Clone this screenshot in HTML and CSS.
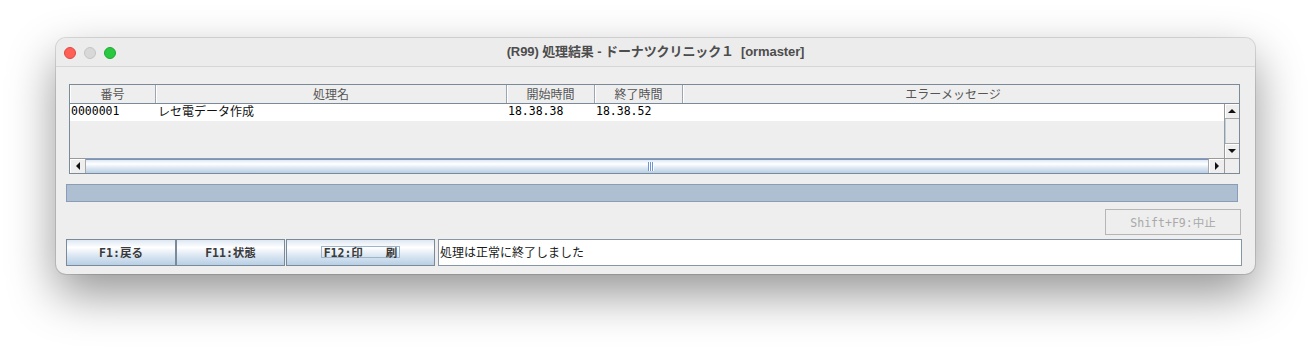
FILE: index.html
```html
<!DOCTYPE html>
<html lang="ja">
<head>
<meta charset="utf-8">
<title>(R99) 処理結果</title>
<link rel="stylesheet" href="styles.css">
</head>
<body>
<div class="window">
  <div class="titlebar">
    <div class="lights">
      <span class="light red"></span>
      <span class="light gray"></span>
      <span class="light green"></span>
    </div>
    <div class="title">(R99) 処理結果 - ドーナツクリニック１&nbsp;&nbsp;[ormaster]</div>
    <div></div>
  </div>
  <div class="content">
    <div class="table">
      <div class="thead">
        <div class="th c1">番号</div>
        <div class="th c2">処理名</div>
        <div class="th c3">開始時間</div>
        <div class="th c4">終了時間</div>
        <div class="th c5 last">エラーメッセージ</div>
        <div class="th-corner"></div>
      </div>
      <div class="tbody">
        <div class="viewport">
          <div class="tr">
            <div class="td c1 mono">0000001</div>
            <div class="td c2">レセ電データ作成</div>
            <div class="td c3 mono">18.38.38</div>
            <div class="td c4 mono">18.38.52</div>
            <div class="td c5"></div>
          </div>
        </div>
        <div class="vscroll">
          <div class="sbtn vbtn"><span class="arrow up"></span></div>
          <div class="vtrack"></div>
          <div class="sbtn vbtn down-btn"><span class="arrow down"></span></div>
        </div>
      </div>
      <div class="hrow">
        <div class="hscroll">
          <div class="sbtn hbtn left-btn"><span class="arrow left"></span></div>
          <div class="hthumb"><span class="grip"></span></div>
          <div class="sbtn hbtn right-btn"><span class="arrow right"></span></div>
        </div>
        <div class="corner"></div>
      </div>
    </div>
    <div class="progress"></div>
    <div class="action-row">
      <button class="cancel" disabled>Shift+F9:中止</button>
    </div>
    <div class="footer">
      <button class="fbtn b1">F1:戻る</button>
      <button class="fbtn b2">F11:状態</button>
      <button class="fbtn b3"><span class="focus">F12:印　　刷</span></button>
      <div class="status">処理は正常に終了しました</div>
    </div>
  </div>
</div>
</body>
</html>
```

FILE: styles.css
```css
* { box-sizing: border-box; }

html {
  height: 100%;
  background: #ffffff;
}

body {
  margin: 0;
  min-height: 100%;
  padding: 38px 0 0 56px;
  background: #ffffff;
  font-family: "Noto Sans CJK JP", sans-serif;
}

.window {
  width: 1199px;
  height: 236px;
  border-radius: 10px;
  background: #eeeeee;
  box-shadow: 0 0 0 1px rgba(0, 0, 0, 0.12), 0 20px 48px rgba(0, 0, 0, 0.42);
  overflow: hidden;
  display: flex;
  flex-direction: column;
}

.titlebar {
  height: 29px;
  flex: none;
  background: #ececec;
  border-bottom: 1px solid #d6d6d6;
  display: grid;
  grid-template-columns: 1fr auto 1fr;
  align-items: center;
}

.lights {
  display: flex;
  gap: 8px;
  padding-left: 8px;
  padding-top: 1px;
}

.light {
  width: 12px;
  height: 12px;
  border-radius: 50%;
}
.light.red { background: #fe5f57; border: 1px solid #e2463f; }
.light.gray { background: #d8d8d8; border: 1px solid #c4c4c4; }
.light.green { background: #2ac840; border: 1px solid #1ea833; }

.title {
  font: bold 13px "Liberation Sans", "Noto Sans CJK JP", sans-serif;
  color: #4d4d4d;
  white-space: pre;
  margin-top: -3px;
  letter-spacing: -0.1px;
}

.content {
  flex: 1;
  padding: 17px 13px 8px 10px;
  display: flex;
  flex-direction: column;
}

/* table */
.table {
  margin: 0 2px 0 3px;
  height: 90px;
  flex: none;
  border: 1px solid #7a8a99;
  display: flex;
  flex-direction: column;
  background: #eeeeee;
}

.thead {
  height: 19px;
  display: flex;
  border-bottom: 1px solid #7a8a99;
}

.th {
  font-size: 12px;
  color: #555555;
  text-align: center;
  line-height: 17px;
  border-right: 1px solid #9aa6b2;
  box-shadow: inset 1px 0 0 #ffffff;
  white-space: nowrap;
}

.th.last { border-right: none; width: 540px; }

.c1 { width: 86px; }
.c2 { width: 351px; }
.c3 { width: 88px; }
.c4 { width: 88px; }
.c5 { width: 541px; }

.th-corner {
  flex: 1;
}

.tbody {
  height: 54px;
  display: flex;
}

.viewport {
  width: 1154px;
  background: #eeeeee;
}

.tr {
  display: flex;
  height: 17px;
  background: #ffffff;
}

.td {
  font-size: 12px;
  line-height: 13px;
  height: 17px;
  color: #111111;
  padding-left: 2px;
  white-space: nowrap;
}

.td.mono {
  font-family: "DejaVu Sans Mono", "Noto Sans CJK JP", monospace;
  font-size: 11.5px;
  line-height: 15px;
  padding-left: 1px;
  color: #000000;
}

.vscroll {
  flex: 1;
  display: flex;
  flex-direction: column;
  border-left: 1px solid #9a9a9a;
}

.sbtn {
  background: #eeeeee;
  display: flex;
  align-items: center;
  justify-content: center;
}

.vbtn {
  height: 15px;
  border-bottom: 1px solid #a8a8a8;
  box-shadow: inset 1px 1px 0 #ffffff;
}

.down-btn {
  border-top: 1px solid #a8a8a8;
  border-bottom: none;
}

.vtrack {
  flex: 1;
  border-left: 1px solid #b8cfe5;
  background: #eeeeee;
}

.arrow {
  width: 0;
  height: 0;
  border-style: solid;
  display: block;
}
.arrow.up { border-width: 0 4px 4px 4px; border-color: transparent transparent #111 transparent; }
.arrow.down { border-width: 4px 4px 0 4px; border-color: #111 transparent transparent transparent; }
.arrow.left { border-width: 4px 4px 4px 0; border-color: transparent #111 transparent transparent; }
.arrow.right { border-width: 4px 0 4px 4px; border-color: transparent transparent transparent #111; }

.hrow {
  flex: 1;
  display: flex;
  border-top: 1px solid #9a9a9a;
}

.hscroll {
  width: 1154px;
  display: flex;
}

.hbtn {
  width: 16px;
  box-shadow: inset 1px 1px 0 #ffffff;
}
.left-btn { border-right: 1px solid #a8a8a8; }
.right-btn { border-left: 1px solid #a8a8a8; }

.hthumb {
  flex: 1;
  border-top: 1px solid #6f95d2;
  background: linear-gradient(to bottom, #dde8f3 0%, #ffffff 30%, #dde8f3 60%, #b8cfe5 100%);
  display: flex;
  align-items: center;
  justify-content: center;
}

.grip {
  width: 6px;
  height: 9px;
  background: repeating-linear-gradient(to right, #6f95d2 0 1px, #ffffff 1px 2px);
  margin-left: 7px;
}

.corner {
  flex: 1;
  border-left: 1px solid #9a9a9a;
  background: #eeeeee;
}

.progress {
  margin: 10px 4px 0 0;
  height: 18px;
  flex: none;
  border: 1px solid #8a9cb6;
  background: #adbfd1;
}

.action-row {
  display: flex;
  justify-content: flex-end;
  margin-top: 7px;
  padding-right: 1px;
}

.cancel {
  width: 136px;
  height: 26px;
  margin: 0;
  padding: 0;
  border: 1px solid #b6b6b6;
  background: #eeeeee;
  color: #a9a9a9;
  font-family: "DejaVu Sans Mono", "Noto Sans CJK JP", monospace;
  font-size: 11.5px;
}

.footer {
  display: flex;
  margin-top: 4px;
  height: 27px;
}

.fbtn {
  height: 27px;
  margin: 0;
  padding: 0 0 1px 0;
  border: 1px solid #7a8a99;
  background: linear-gradient(to bottom, #dde8f3 0%, #ffffff 30%, #dde8f3 60%, #b8cfe5 100%);
  color: #3a3a3a;
  font-family: "DejaVu Sans Mono", "Noto Sans CJK JP", monospace;
  font-size: 11.5px;
  font-weight: bold;
  display: flex;
  align-items: center;
  justify-content: center;
}

.b1 { width: 110px; }
.b2 { width: 109px; }
.b3 { width: 149px; margin-left: 1px; }

.focus {
  border: 1px solid #9fb3c9;
  padding: 0 2px;
  height: 12px;
  display: flex;
  align-items: center;
}

.status {
  flex: 1;
  margin-left: 3px;
  height: 27px;
  border: 1px solid #8796a6;
  background: #ffffff;
  font-size: 12px;
  color: #1a1a1a;
  line-height: 23px;
  padding-left: 1px;
  white-space: nowrap;
}
```
